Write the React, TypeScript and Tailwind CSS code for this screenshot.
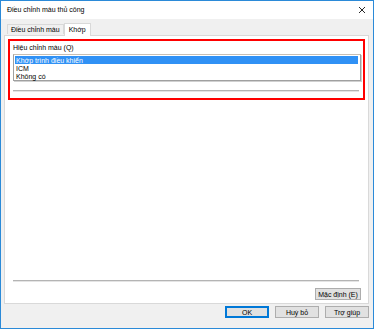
const font = { fontFamily: '"Liberation Sans", Arial, sans-serif' }

const Btn = ({ label, primary = false, w = "w-[44px]" }: { label: string; primary?: boolean; w?: string }) => (
  <div
    className={`${w} h-[12px] flex items-center justify-center bg-[#e1e1e1] text-[7px] text-black leading-none ${
      primary ? "border border-[#0078d7] shadow-[inset_0_0_0_1px_#0078d7]" : "border border-[#adadad]"
    }`}
  >
    {label}
  </div>
)

export default function App() {
  return (
    <div className="w-[374px] h-[329px] border border-[#2b8ad8] bg-[#f0f0f0] flex flex-col text-black" style={font}>
      {/* title bar */}
      <div className="h-[18px] bg-white flex items-center justify-between pl-[6px] pr-[5px]">
        <span className="text-[7px]">Điều chỉnh màu thủ công</span>
        <svg width="8" height="8" viewBox="0 0 8 8" className="mr-[2px]">
          <path d="M1 1 L7 7 M7 1 L1 7" stroke="#111" strokeWidth="0.9" />
        </svg>
      </div>

      <div className="flex flex-col pl-[3px] pr-[4px] pt-[4px]">
        {/* tabs */}
        <div className="flex items-end h-[12px] pl-[3px] relative z-10">
          <div className="h-[10px] mb-[1px] px-[3px] flex items-center border border-b-0 border-[#d9d9d9] bg-[#f0f0f0] text-[7px] leading-none">
            Điều chỉnh màu
          </div>
          <div className="h-[13px] -mb-[1px] px-[4px] pb-[2px] flex items-center border border-b-0 border-[#d9d9d9] bg-white text-[7px] leading-none">
            Khớp
          </div>
        </div>

        {/* panel */}
        <div className="h-[269px] border border-[#d9d9d9] bg-white flex flex-col">
          <div className="ml-[3px] mt-[3px] w-[357px] h-[61px] border-2 border-[#ff0000] flex flex-col pl-[3px] pr-[2px]">
            <div className="mt-[2px] h-[9px] flex items-center text-[7px] leading-none">Hiệu chỉnh màu (Q)</div>
            <div className="mt-[2px] h-[27px] w-[348px] border border-[#a0a0a0] border-t-[#c8bfb3] shadow-[1px_1px_0_#d0d0d0] flex flex-col pt-[1px] pl-[1px] pr-[2px]">
              <div className="h-[8px] bg-[#3091f5] text-white text-[7px] leading-none flex items-center pl-[1px]">
                Khớp trình điều khiển
              </div>
              <div className="h-[8px] text-[7px] leading-none flex items-center pl-[1px]">ICM</div>
              <div className="h-[8px] text-[7px] leading-none flex items-center pl-[1px]">Không có</div>
            </div>
            <div className="mt-[9px] w-[346px] border-t border-[#b4b4b4] shadow-[0_1px_0_#e4e4e4]" />
          </div>

          <div className="flex-1" />
          <div className="ml-[8px] w-[346px] border-t border-[#b4b4b4] shadow-[0_1px_0_#e4e4e4]" />
          <div className="flex justify-end pr-[7px] mt-[7px] mb-[3px]">
            <Btn label="Mặc định (E)" w="w-[46px]" />
          </div>
        </div>

        {/* bottom buttons */}
        <div className="flex justify-end gap-[6px] mt-[2px]">
          <Btn label="OK" primary />
          <Btn label="Huỷ bỏ" />
          <Btn label="Trợ giúp" />
        </div>
      </div>
    </div>
  )
}
